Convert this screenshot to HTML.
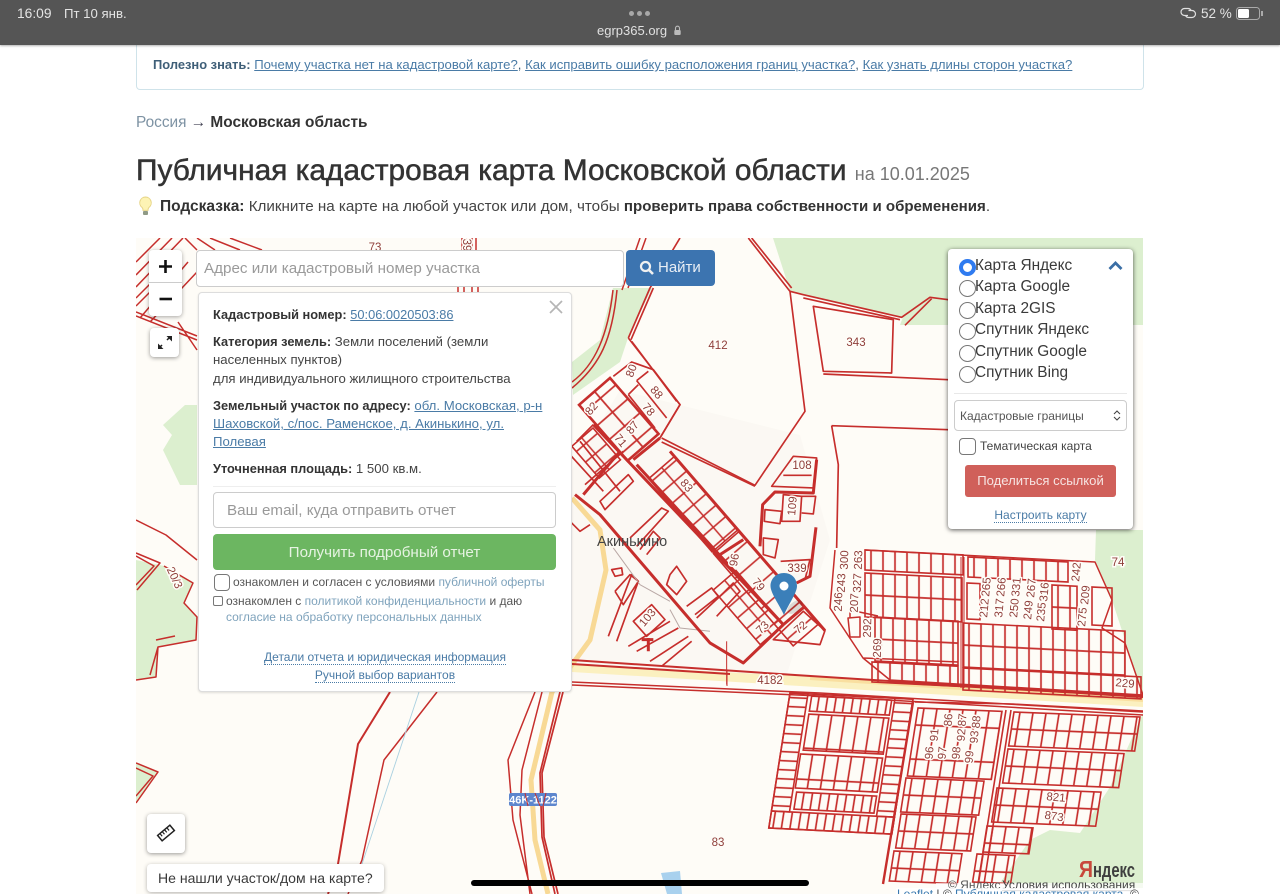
<!DOCTYPE html>
<html lang="ru"><head><meta charset="utf-8"><title>Публичная кадастровая карта Московской области</title>
<style>
html,body{margin:0;padding:0;width:1280px;height:894px;overflow:hidden;background:#fff}
body{font-family:"Liberation Sans","Noto Sans CJK SC",sans-serif;color:#333;position:relative}
.a{position:absolute;white-space:nowrap}
a{color:#4a7ba6;text-decoration:underline}
#top{position:absolute;left:0;top:0;width:1280px;height:45px;background:#555;box-shadow:0 1px 2px rgba(0,0,0,.3);color:#e4e4e4;z-index:5}
#map{position:absolute;left:136px;top:238px;filter:blur(.3px)}
.r{fill:none;stroke:#c62e2c;stroke-width:5;stroke-linejoin:round}
.t{fill:none;stroke:#c62e2c;stroke-width:9;stroke-linejoin:round}
.p{fill:none;stroke:#c62e2c;stroke-width:1.5;stroke-linejoin:round}
.b{stroke:#c62e2c;stroke-width:1.6}
.bt{stroke:#c62e2c;stroke-width:2.6}
.n{font:11.5px "Liberation Sans",sans-serif;fill:#8f3e3a;text-anchor:middle;dominant-baseline:middle;paint-order:stroke;stroke:#fffdf8;stroke-width:3px}
.box{position:absolute;background:#fff;box-sizing:border-box}
.pop{font-size:13.2px;color:#444}
.pop b{color:#333;font-size:12.8px}
.dot{color:#4a7ba6;text-decoration:none;border-bottom:1px dotted #4a7ba6}
.rad{position:absolute;left:959px;width:17px;height:17px;border-radius:50%;border:1.5px solid #777;box-sizing:border-box;background:#fff}
.lab{position:absolute;left:975px;font-size:15.4px;color:#3a3a3a;white-space:nowrap;line-height:18px}
</style></head><body>

<div id="top">
<div class="a" style="left:17px;top:6px;font-size:13.8px">16:09</div>
<div class="a" style="left:64px;top:6px;font-size:13.2px">Пт 10 янв.</div>
<div class="a" style="left:629px;top:11px;width:5px;height:5px;border-radius:50%;background:#a8a8a8;box-shadow:8px 0 #a8a8a8,16px 0 #a8a8a8"></div>
<div class="a" style="left:597px;top:23px;font-size:13px;color:#e0e0e0">egrp365.org</div>
<svg class="a" style="left:673px;top:25px" width="9" height="11" viewBox="0 0 9 11"><path d="M2.500 5V3.200a2 2 0 0 1 4 0V5" fill="none" stroke="#bbb" stroke-width="1.100"/><rect x="1.300" y="5" width="6.400" height="5" rx="1" fill="#bbb"/></svg>
<svg class="a" style="left:1180px;top:6px" width="17" height="14" viewBox="0 0 17 14"><path d="M8 9.500H4.500a3.500 3.500 0 0 1 0-7H8a3.500 3.500 0 0 1 3.200 2.200M8.500 4.500h3.500a3.500 3.500 0 0 1 0 7H8.500a3.500 3.500 0 0 1-3-2" fill="none" stroke="#e0e0e0" stroke-width="1.200"/></svg>
<div class="a" style="left:1201px;top:6px;font-size:13.5px">52 %</div>
<div class="a" style="left:1236px;top:7px;width:24px;height:13px;border:1px solid #aaa;border-radius:3.500px;box-sizing:border-box"></div>
<div class="a" style="left:1238px;top:9px;width:11px;height:9px;background:#fff;border-radius:1.500px"></div>
<div class="a" style="left:1261px;top:11px;width:1.500px;height:5px;background:#aaa"></div>
</div>

<div class="a" style="left:136px;top:40px;width:1008px;height:50px;border:1px solid #cfe3ea;border-top:0;border-radius:0 0 4px 4px;box-sizing:border-box"></div>
<div class="a" style="left:153px;top:57px;font-size:13.13px;color:#3f5f78"><b style="font-size:12.9px">Полезно знать:</b> <a href="#">Почему участка нет на кадастровой карте?</a>, <a href="#">Как исправить ошибку расположения границ участка?</a>, <a href="#">Как узнать длины сторон участка?</a></div>

<div class="a" style="left:136px;top:114px;font-size:15.4px;color:#7d92a3">Россия <span style="color:#445">→</span> <b style="color:#333">Московская область</b></div>
<div class="a" style="left:136px;top:154px;font-size:29.85px;color:#333;line-height:34px;-webkit-text-stroke:.5px #333">Публичная кадастровая карта Московской области <span style="font-size:18px;color:#777;-webkit-text-stroke:0">на 10.01.2025</span></div>
<svg class="a" style="left:138px;top:196px" width="15" height="21" viewBox="0 0 15 21"><path d="M7.500 1a5.800 5.800 0 0 0-3.500 10.400c.8.800 1 1.800 1 3h5c0-1.200.2-2.200 1-3A5.800 5.800 0 0 0 7.500 1z" fill="#fdf3b4" stroke="#e6d486"/><rect x="5" y="15" width="5" height="4" rx="1" fill="#8f9a86"/></svg>
<div class="a" style="left:160px;top:198px;font-size:15.2px;color:#444"><b style="color:#333;font-size:15.5px">Подсказка:</b> Кликните на карте на любой участок или дом, чтобы <b style="color:#333;font-size:15.05px">проверить права собственности и обременения</b>.</div>

<svg id="map" width="1007" height="656" viewBox="136 238 1007 656" xmlns="http://www.w3.org/2000/svg">
<defs>
<pattern id="v12" width="12" height="100" patternUnits="userSpaceOnUse"><path d="M6 0V100" stroke="#c62e2c" stroke-width="1.700"/></pattern>
<pattern id="v8" width="8.500" height="100" patternUnits="userSpaceOnUse"><path d="M4 0V100" stroke="#c62e2c" stroke-width="1.700"/></pattern>
<pattern id="h9" width="100" height="9" patternUnits="userSpaceOnUse"><path d="M0 4.500H100" stroke="#c62e2c" stroke-width="1.700"/></pattern>
<pattern id="g44" width="12" height="44" patternUnits="userSpaceOnUse"><path d="M6 0V44M0 22H12" stroke="#c62e2c" stroke-width="1.700"/></pattern>
<pattern id="g36" width="13" height="36" patternUnits="userSpaceOnUse"><path d="M6 0V36M0 18H13" stroke="#c62e2c" stroke-width="1.700"/></pattern>
<pattern id="g34" width="13" height="34" patternUnits="userSpaceOnUse"><path d="M6 0V34M0 17H13" stroke="#c62e2c" stroke-width="1.700"/></pattern>
<pattern id="s15" width="15" height="34" patternUnits="userSpaceOnUse"><path d="M7 0V34M0 17H15" stroke="#c62e2c" stroke-width="1.600"/></pattern>
<pattern id="s20" width="20" height="34" patternUnits="userSpaceOnUse"><path d="M10 0V34" stroke="#c62e2c" stroke-width="1.600"/></pattern>
<pattern id="s18" width="18.500" height="41" patternUnits="userSpaceOnUse"><path d="M9 0V41M0 20.500H18.500" stroke="#c62e2c" stroke-width="1.700"/></pattern>
<pattern id="s14" width="14" height="30" patternUnits="userSpaceOnUse"><path d="M7 0V30M0 15H14" stroke="#c62e2c" stroke-width="1.600"/></pattern>
</defs>
<rect x="136" y="238" width="1007" height="656" fill="#fefcf7"/>
<g fill="#dcefcf">
<path d="M773 238H1143V325H900L903 317 803 295 790 291Z"/>
<path d="M613 288H652L628 338 620 362 573 395 572 362 600 340Z"/>
<path d="M163 425L185 405H197V485H180L163 450 172 435Z"/>
<path d="M136 560L164 566 193 583 184 603 197 617 196 640 158 647 156 677 136 680Z"/>
<path d="M136 763L158 772 136 803Z"/>
<path d="M1096 530H1143V695L1112 600 1095 560Z"/>
<path d="M1143 713L1110 787 1080 833 1050 830 1030 840 1000 883 1143 890Z"/>
</g>
<path d="M620 390L800 435 830 540 785 680H572V470Z" fill="#fbf8f3"/>
<path d="M661 873L680 871 682 894H667Z" fill="#a9d1ee"/>
<path d="M572 664L800 676 1143 697V707L800 686 572 672Z" fill="#fbf0c0"/>
<path d="M572 498L600 530 606 570 590 640 552 692 531 780 535 840 548 894" fill="none" stroke="#f8d995" stroke-width="5"/>
<path d="M810 678L1143 700" stroke="#f9dfa0" stroke-width="4" fill="none"/>

<g class="p">
<path d="M136 262L160 238M136 275L172 238M136 287L183 238M136 298L150 284M136 306L160 282M140 318L188 262M150 322L197 272"/>
<path d="M136 312L197 336M136 316L197 340M178 322L197 350M197 238L215 250M210 238L240 250M230 238L262 250M185 238L197 250"/>
<path d="M462 238V250M466 238V250M472 238V250M476 238V250M458 286V292M464 286V292M472 286V292M478 286V292"/>
<path d="M136 556L154 566 136 585M136 553L160 563 137 590M164 566L193 583 184 603 197 617 196 640 158 647 156 677 136 680M156 640L175 636M158 647L150 675"/>
<path d="M136 763L158 772 136 803M136 768L153 776 136 796"/>
<path d="M136 520L166 535 197 560"/>
<path d="M390 692L358 744 338 864 328 894" stroke-width="2"/>
<path d="M437 692L384 760 362 860 348 894"/>
<path d="M419 692L362 864" stroke="#a9d0e0" stroke-width=".9"/>
<path d="M535 692L508 760 513 820 532 894M542 692L522 770 520 815 530 894"/>
<path d="M563 692L542 773 544 837 558 894M560 692L540 773 542 837 555 894" stroke-width="1.700"/>
<path d="M572 388C600 365 612 340 617 290M572 382C595 365 608 335 613 290"/>
<path d="M572 660L795 675 1143 697M572 664L730 674" stroke-width="2"/>
<path d="M572 682L820 693 1143 712M572 685L820 696 1143 715"/>
<path d="M727 670V686" stroke-width="1"/>
<path d="M640 238L622 290M646 238L628 288"/>
</g>

<g transform="translate(570 238) scale(.3333)">
<g class="r">
<path d="M535 0L660 160 705 520 555 742 275 600M545 0L665 150M175 300L240 150 330 0M183 305L250 150M175 300L330 500 270 600M185 310L320 490"/>
<path d="M275 612L555 745"/>
<path d="M660 160L700 170 995 238 1080 178 1135 185M1005 262L1085 182M700 180L990 245"/>
<path d="M730 205L970 245 965 405 760 400ZM760 408L1135 425"/>
<path d="M785 563L1135 575M785 563L805 680 800 930"/>
<path d="M605 745L670 655 740 660 730 750ZM640 712L725 712"/>
<path d="M640 770L695 775 690 850 635 850ZM695 775L737 775 730 828 695 825M585 815L635 820 630 857 583 850ZM580 900L625 905 615 960 580 950Z"/>
<path d="M632 970L720 965 705 1025"/>
<path d="M610 1205L700 1120 765 1178 750 1220Z"/>
<path d="M130 415L185 372 250 395 330 500 270 600M200 428L235 400M175 470L205 440M200 428L290 540M175 470L255 570"/>
<path d="M20 610L70 560M0 650L100 760M30 610L150 760"/>
<path d="M45 740L160 640"/>
<path d="M90 790L175 710 190 730 105 815ZM180 900L275 810 295 820 200 925M210 935L250 880 270 900 230 950"/>
<path d="M300 1010L320 985 350 1030 320 1070 290 1040ZM350 1105L425 1050 445 1075 375 1130M380 1140L450 1075 490 1035 510 1060 440 1135"/>
<path d="M115 1195L185 1010 205 1030 140 1210M135 1060L180 1010 205 1030 160 1100 135 1060"/>
<path d="M190 1150L245 1100 285 1145 230 1195ZM175 1225L300 1150M200 1240L325 1170M240 1270L355 1195M275 1285L365 1210"/>
<path d="M0 850L30 880 60 860M125 995L155 990 158 1010 135 1015Z"/>
<path d="M300 1115L330 1170 420 1180" stroke="#b9a8a5" stroke-width="3"/>
<path d="M130 930L210 1040 300 1090" stroke="#b9a8a5" stroke-width="3"/>
<path d="M470 1210V1340" stroke-width="3"/>
</g>
<g class="t">
<path d="M190 665L270 600"/>
<path d="M70 560L640 1160M200 680L640 1160M300 640L765 1178M640 1160L705 1105"/>
<path d="M150 640L40 770M15 770L90 830 420 1215 520 1275 640 1160"/>
<path d="M740 665L730 765 615 762 578 800 570 925M738 868L720 1015 680 1035M450 950L520 905"/>
<path d="M235 1200V1240M215 1205H250"/>
</g>
</g>
<g transform="translate(610 378) rotate(49)"><rect width="74" height="41" fill="url(#s18)" class="bt"/></g>
<g transform="translate(637 465) rotate(49.2)">
<rect x="18" y="-34" width="97" height="34" fill="url(#s15)" class="b"/>
<rect x="117" y="-34" width="122" height="34" fill="url(#s20)" class="b"/>
</g>
<g transform="translate(783 625) rotate(49.200)">
<rect x="-72" y="0" width="72" height="30" fill="url(#s14)" class="b"/>
</g>
<g transform="translate(593 428) rotate(49.200)">
<rect x="0" y="0" width="42" height="28" fill="url(#s14)" class="b"/>
</g>

<g class="p" stroke-width="1.700">
<path d="M835 550L830 608 863 658 890 680 1143 695 1125 643 1102 628 1112 600 1095 562 865 550M863 658L958 662"/>
<path d="M850 618L850 610 878 616M848 618L860 617 860 637 850 637Z"/>
</g>
<g class="b">
<rect x="0" y="0" width="98" height="20" fill="url(#v12)" transform="matrix(1 .05 0 1 865 550)"/>
<rect x="0" y="0" width="100" height="20" fill="url(#v12)" transform="matrix(1 .05 0 1 968 557)"/>
<rect x="0" y="0" width="97" height="44" fill="url(#g44)" transform="matrix(1 .05 0 1 865 573)"/>
<rect x="0" y="0" width="83" height="44" fill="url(#g44)" transform="matrix(1 .05 0 1 875 617)"/>
<rect x="0" y="0" width="86" height="20" fill="url(#v12)" transform="matrix(1 .05 0 1 872 662)"/>
<rect x="0" y="0" width="162" height="44" fill="url(#g44)" transform="matrix(1 .05 0 1 963 623)"/>
<rect x="0" y="0" width="178" height="22" fill="url(#v12)" transform="matrix(1 .05 0 1 963 668)"/>
<rect x="0" y="0" width="13" height="36" fill="none" transform="matrix(1 .05 0 1 967 583)"/>
<rect x="0" y="0" width="25" height="44" fill="url(#g44)" transform="matrix(1 .05 0 1 1052 585)"/>
<rect x="0" y="0" width="20" height="38" fill="none" transform="matrix(1 .05 0 1 1092 587)"/>
</g>
<path d="M890 682L1143 696" stroke="#c62e2c" stroke-width="2.600" fill="none"/>
<path d="M961 557V688M964 557V688" stroke="#c62e2c" stroke-width="1" fill="none"/>

<g transform="matrix(1 .05 -.157 1 790 693)" class="b">
<rect x="0" y="0" width="123" height="135" fill="none"/>
<rect x="0" y="0" width="18" height="118" fill="url(#h9)"/>
<rect x="105" y="0" width="18" height="118" fill="url(#h9)"/>
<rect x="22" y="2" width="80" height="15" fill="url(#v8)"/>
<rect x="22" y="20" width="80" height="36" fill="url(#g36)"/>
<rect x="20" y="60" width="82" height="34" fill="url(#g34)"/>
<rect x="22" y="98" width="80" height="17" fill="url(#v8)"/>
<rect x="0" y="118" width="123" height="17" fill="url(#v8)"/>
</g>
<path d="M913 702L883 884" stroke="#c62e2c" stroke-width="2.400" fill="none"/>

<g class="b">
<rect width="84" height="68" fill="url(#g34)" transform="matrix(1 .04 -.157 1 918 708)"/>
<rect width="78" height="34" fill="url(#g34)" transform="matrix(1 .04 -.157 1 906 778)"/>
<rect width="75" height="34" fill="url(#g34)" transform="matrix(1 .04 -.157 1 901 814)"/>
<rect width="68" height="30" fill="url(#g34)" transform="matrix(1 .04 -.157 1 894 851)"/>
<rect width="126" height="34" fill="url(#g34)" transform="matrix(1 .04 -.157 1 1014 712)"/>
<rect width="116" height="34" fill="url(#g34)" transform="matrix(1 .04 -.157 1 1008 749)"/>
<rect width="104" height="34" fill="url(#g34)" transform="matrix(1 .04 -.157 1 997 788)"/>
<rect width="46" height="26" fill="url(#g34)" transform="matrix(1 .04 -.157 1 987 826)"/>
<rect width="38" height="28" fill="url(#g34)" transform="matrix(1 .04 -.157 1 977 854)"/>
</g>
<path d="M1006 710L978 884M1011 710L984 884" stroke="#c62e2c" stroke-width="1.600" fill="none"/>
<path d="M1143 711L1013 704 915 702" stroke="#c62e2c" stroke-width="1.400" fill="none"/>

<g>
<text class="n" x="375" y="248">73</text>
<text class="n" transform="translate(466 245) rotate(90)">39</text>
<text class="n" x="718" y="346">412</text>
<text class="n" x="856" y="343">343</text>
<text class="n" transform="translate(632 371) rotate(-70)">80</text>
<text class="n" transform="translate(656 393) rotate(50)">88</text>
<text class="n" transform="translate(648 410) rotate(50)">78</text>
<text class="n" transform="translate(592 409) rotate(-50)">82</text>
<text class="n" transform="translate(633 428) rotate(-50)">87</text>
<text class="n" transform="translate(620 441) rotate(50)">71</text>
<text class="n" transform="translate(686 486) rotate(50)">83</text>
<text class="n" x="802" y="466">108</text>
<text class="n" transform="translate(793 506) rotate(-85)">109</text>
<text class="n" x="797" y="569">339</text>
<text class="n" transform="translate(735 560) rotate(-80)">96</text>
<text class="n" transform="translate(758 585) rotate(50)">79</text>
<text class="n" transform="translate(763 628) rotate(-45)">73</text>
<text class="n" transform="translate(801 628) rotate(-40)">72</text>
<text class="n" transform="translate(648 618) rotate(-50)">103</text>
<text class="n" x="770" y="681">4182</text>
<text class="n" x="1118" y="563">74</text>
<text class="n" transform="translate(1125 684) rotate(5)">229</text>
<text class="n" x="718" y="843" style="stroke:none">83</text>
<text class="n" transform="translate(174 578) rotate(65)">20/3</text>
</g>
<g>
<text class="n" transform="translate(845 560) rotate(-88)">300</text>
<text class="n" transform="translate(842 583) rotate(-88)">243</text>
<text class="n" transform="translate(839 602) rotate(-88)">246</text>
<text class="n" transform="translate(859 560) rotate(-88)">263</text>
<text class="n" transform="translate(858 583) rotate(-88)">327</text>
<text class="n" transform="translate(855 603) rotate(-88)">207</text>
<text class="n" transform="translate(868 628) rotate(-88)">292</text>
<text class="n" transform="translate(878 648) rotate(-88)">269</text>
<text class="n" transform="translate(985 608) rotate(-85)">212</text>
<text class="n" transform="translate(987 587) rotate(-85)">265</text>
<text class="n" transform="translate(1000 608) rotate(-85)">317</text>
<text class="n" transform="translate(1002 587) rotate(-85)">266</text>
<text class="n" transform="translate(1015 608) rotate(-85)">250</text>
<text class="n" transform="translate(1017 587) rotate(-85)">331</text>
<text class="n" transform="translate(1029 610) rotate(-85)">249</text>
<text class="n" transform="translate(1032 588) rotate(-85)">267</text>
<text class="n" transform="translate(1042 612) rotate(-85)">235</text>
<text class="n" transform="translate(1045 592) rotate(-85)">316</text>
<text class="n" transform="translate(1077 572) rotate(-85)">242</text>
<text class="n" transform="translate(1083 617) rotate(-85)">275</text>
<text class="n" transform="translate(1086 595) rotate(-85)">209</text>
<text class="n" transform="translate(949 720) rotate(-85)">86</text>
<text class="n" transform="translate(935 735) rotate(-85)">91</text>
<text class="n" transform="translate(962 735) rotate(-85)">92</text>
<text class="n" transform="translate(963 720) rotate(-85)">87</text>
<text class="n" transform="translate(975 737) rotate(-85)">93</text>
<text class="n" transform="translate(977 722) rotate(-85)">88</text>
<text class="n" transform="translate(930 753) rotate(-85)">96</text>
<text class="n" transform="translate(943 753) rotate(-85)">97</text>
<text class="n" transform="translate(957 753) rotate(-85)">98</text>
<text class="n" transform="translate(970 757) rotate(-85)">99</text>
<text class="n" transform="translate(1056 798) rotate(5)">821</text>
<text class="n" transform="translate(1054 817) rotate(8)">873</text>
</g>
<text x="597" y="546" font-family="Liberation Sans" font-size="14.500" fill="#444">Акинькино</text>
<ellipse cx="795" cy="607" rx="9" ry="5" fill="#000" opacity=".12" transform="rotate(-40 795 607)"/>
<path d="M784 573c-8 0-13.500 6-13.500 13 0 7 9 19 13.500 29 4-10 13-22 13-29 0-7-5-13-13-13z" fill="#3b7fb9"/>
<circle cx="784" cy="586" r="4.500" fill="#fff"/>
<rect x="509" y="793" width="48" height="13" rx="2" fill="#5d86cd"/>
<text x="533" y="803.500" font-family="Liberation Sans" font-weight="bold" font-size="11" fill="#fff" text-anchor="middle">46K-1122</text>
<path d="M535 793L540 806M546 793L543 806M525 793L528 806" stroke="#c62e2c" stroke-width="1"/>
<text x="1079" y="877" font-family="Liberation Sans" font-weight="bold" font-size="23" fill="#c8493b" textLength="14" lengthAdjust="spacingAndGlyphs">Я</text>
<text x="1093" y="877" font-family="Liberation Sans" font-weight="bold" font-size="20" fill="#3f3f3f" textLength="42" lengthAdjust="spacingAndGlyphs">ндекс</text>
<rect x="936" y="883" width="207" height="11" fill="#fff" opacity=".7"/>
<text x="948" y="889" font-family="Liberation Sans" font-size="12" fill="#555">© Яндекс</text>
<text x="1002" y="889" font-family="Liberation Sans" font-size="12" fill="#444" text-decoration="underline">Условия использования</text>
<rect x="896" y="888" width="247" height="6" fill="#fff" opacity=".85"/>
<text x="897" y="898" font-family="Liberation Sans" font-size="12" fill="#3b7ab0">Leaflet <tspan fill="#444">| ©</tspan> Публичная кадастровая карта, <tspan fill="#444">©</tspan></text>
</svg>

<div class="box" style="left:149px;top:250px;width:33px;height:66px;border-radius:4px;box-shadow:0 1px 4px rgba(0,0,0,.35)"></div>
<div class="a" style="left:149px;top:282px;width:33px;height:1px;background:#ccc"></div>
<svg class="a" style="left:149px;top:250px" width="33" height="66"><path d="M10 16.500H23M16.500 10V23" stroke="#111" stroke-width="2.600"/><path d="M10.500 49H23" stroke="#111" stroke-width="2.600"/></svg>
<div class="box" style="left:150px;top:328px;width:29px;height:29px;border-radius:4px;box-shadow:0 1px 4px rgba(0,0,0,.4)"></div>
<svg class="a" style="left:150px;top:328px" width="29" height="29"><path d="M16.500 8H22V13.500ZM8 15.500V21H13.500Z" fill="#222"/><path d="M19.500 9.500L17 12M9.500 19.500L12 17" stroke="#222" stroke-width="1.500"/></svg>

<div class="box" style="left:196px;top:250px;width:428px;height:37px;border:1px solid #ccc;border-radius:4px"></div>
<div class="a" style="left:204px;top:260px;font-size:15.2px;color:#9a9a9a">Адрес или кадастровый номер участка</div>
<div class="box" style="left:626px;top:250px;width:89px;height:36px;background:#3c74b0;border-radius:4px"></div>
<svg class="a" style="left:639px;top:260px" width="16" height="16"><circle cx="6.500" cy="6.500" r="4.500" fill="none" stroke="#f0f0f0" stroke-width="2.200"/><path d="M10 10L14 14" stroke="#f0f0f0" stroke-width="2.600"/></svg>
<div class="a" style="left:658px;top:259px;font-size:15px;color:#e8eef5">Найти</div>

<div class="box pop" style="left:198px;top:292px;width:374px;height:400px;border:1px solid #ddd;border-radius:4px;box-shadow:0 1px 2px rgba(0,0,0,.12)"></div>
<svg class="a" style="left:549px;top:300px" width="14" height="14"><path d="M1 1L13 13M13 1L1 13" stroke="#b5b5b5" stroke-width="1.700"/></svg>
<div class="a pop" style="left:213px;top:307px"><b>Кадастровый номер:</b> <a href="#" style="font-size:12.8px">50:06:0020503:86</a></div>
<div class="a pop" style="left:213px;top:334px"><b>Категория земель:</b> Земли поселений (земли</div>
<div class="a pop" style="left:213px;top:352px">населенных пунктов)</div>
<div class="a pop" style="left:213px;top:371px">для индивидуального жилищного строительства</div>
<div class="a pop" style="left:213px;top:398px"><b>Земельный участок по адресу:</b> <a href="#">обл. Московская, р-н</a></div>
<div class="a pop" style="left:213px;top:416px"><a href="#">Шаховской, с/пос. Раменское, д. Акинькино, ул.</a></div>
<div class="a pop" style="left:213px;top:434px"><a href="#">Полевая</a></div>
<div class="a pop" style="left:213px;top:461px"><b>Уточненная площадь:</b> 1 500 кв.м.</div>
<div class="a" style="left:213px;top:486px;width:343px;height:1px;background:#eee"></div>
<div class="box" style="left:213px;top:492px;width:343px;height:36px;border:1px solid #ccc;border-radius:4px"></div>
<div class="a" style="left:227px;top:502px;font-size:15.2px;color:#999">Ваш email, куда отправить отчет</div>
<div class="box" style="left:213px;top:534px;width:343px;height:36px;background:#6cb661;border-radius:4px;text-align:center;font-size:15.2px;line-height:37px;color:#e6f3e2">Получить подробный отчет</div>
<div class="box" style="left:214px;top:574px;width:16px;height:17px;border:1.500px solid #777;border-radius:4px"></div>
<div class="a" style="left:233px;top:575px;font-size:12px;color:#555">ознакомлен и согласен с условиями <span style="color:#7fa3bc">публичной оферты</span></div>
<div class="box" style="left:213px;top:596px;width:10px;height:10px;border:1.300px solid #777;border-radius:2px"></div>
<div class="a" style="left:226px;top:594px;font-size:12px;color:#555">ознакомлен с <span style="color:#7fa3bc">политикой конфиденциальности</span> и даю</div>
<div class="a" style="left:226px;top:610px;font-size:12px;color:#7fa3bc">согласие на обработку персональных данных</div>
<div class="a" style="left:198px;top:650px;width:374px;text-align:center;font-size:12px"><span class="dot">Детали отчета и юридическая информация</span></div>
<div class="a" style="left:198px;top:668px;width:374px;text-align:center;font-size:12px"><span class="dot">Ручной выбор вариантов</span></div>

<div class="box" style="left:948px;top:249px;width:185px;height:280px;border-radius:4px;box-shadow:0 1px 5px rgba(0,0,0,.65)"></div>
<div class="rad" style="top:259px;border:4.500px solid #2f7bf0"></div><div class="lab" style="top:257px">Карта Яндекс</div>
<div class="rad" style="top:280px"></div><div class="lab" style="top:278px">Карта Google</div>
<div class="rad" style="top:302px"></div><div class="lab" style="top:300px">Карта 2GIS</div>
<div class="rad" style="top:323px"></div><div class="lab" style="top:321px">Спутник Яндекс</div>
<div class="rad" style="top:345px"></div><div class="lab" style="top:343px">Спутник Google</div>
<div class="rad" style="top:366px"></div><div class="lab" style="top:364px">Спутник Bing</div>
<svg class="a" style="left:1108px;top:260px" width="15" height="11"><path d="M1.500 9L7.500 3 13.500 9" fill="none" stroke="#3a6ea5" stroke-width="2.800"/></svg>
<div class="a" style="left:954px;top:393px;width:173px;height:1px;background:#e8e8e8"></div>
<div class="box" style="left:954px;top:400px;width:173px;height:31px;border:1px solid #ccc;border-radius:4px"></div>
<div class="a" style="left:960px;top:409px;font-size:12px;color:#555">Кадастровые границы</div>
<svg class="a" style="left:1112px;top:409px" width="10" height="13"><path d="M2 5L5 2 8 5M2 8L5 11 8 8" fill="none" stroke="#444" stroke-width="1.100"/></svg>
<div class="box" style="left:959px;top:438px;width:17px;height:17px;border:1.500px solid #777;border-radius:4px"></div>
<div class="a" style="left:980px;top:439px;font-size:12px;color:#444">Тематическая карта</div>
<div class="box" style="left:965px;top:465px;width:151px;height:32px;background:#d0605a;border-radius:3px;text-align:center;font-size:13.1px;line-height:32px;color:#f6e4e2">Поделиться ссылкой</div>
<div class="a" style="left:948px;top:508px;width:185px;text-align:center;font-size:12px"><span class="dot">Настроить карту</span></div>

<div class="box" style="left:147px;top:814px;width:38px;height:39px;border-radius:4px;box-shadow:0 1px 4px rgba(0,0,0,.4)"></div>
<svg class="a" style="left:147px;top:814px" width="38" height="39"><g transform="rotate(-40 19 19)"><rect x="11" y="15.500" width="16" height="7" fill="none" stroke="#222" stroke-width="1.500"/><path d="M14 16v3M17 16v3M20 16v3M23 16v3" stroke="#222" stroke-width="1.200"/></g></svg>
<div class="box" style="left:147px;top:864px;width:237px;height:28px;border-radius:4px;box-shadow:0 1px 4px rgba(0,0,0,.3);font-size:14.05px;line-height:28px;padding-left:11px;color:#3a3a3a">Не нашли участок/дом на карте?</div>

<div class="a" style="left:471px;top:880px;width:338px;height:6px;background:#000;border-radius:3px;z-index:6"></div>
</body></html>
